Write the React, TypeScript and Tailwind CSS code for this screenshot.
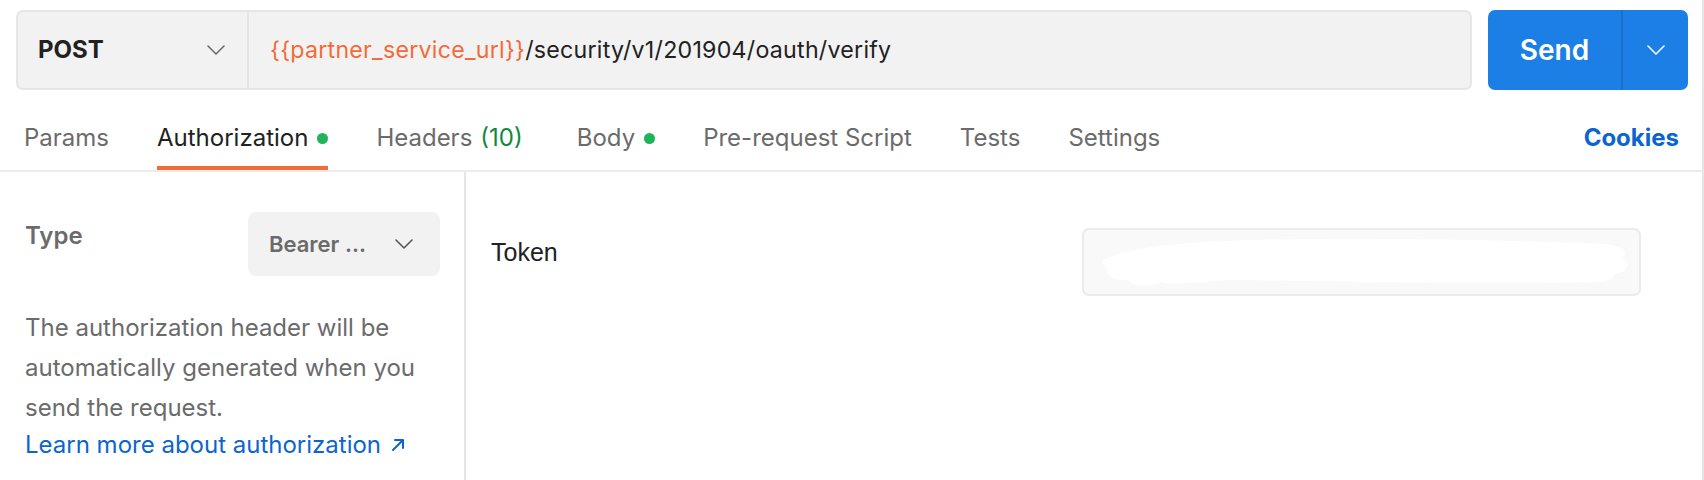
const Chevron = ({ className }: { className?: string }) => (
  <svg width="18" height="10" viewBox="0 0 18 10" fill="none" className={className}>
    <path d="M1 1l8 8 8-8" stroke="currentColor" strokeWidth="1.6" strokeLinecap="round" strokeLinejoin="round" />
  </svg>
);

const Dot = () => <span className="ml-[9px] inline-block w-[11px] h-[11px] rounded-full bg-[#1fb35a]" />;

const tabs = [
  { label: "Params" },
  { label: "Authorization", active: true, dot: true },
  { label: "Headers", count: "(10)" },
  { label: "Body", dot: true, extra: "ml-[6px]" },
  { label: "Pre-request Script" },
  { label: "Tests" },
  { label: "Settings" },
];

export default function App() {
  return (
    <div className="w-[1704px] h-[480px] bg-white flex flex-col border-r-2 border-[#e6e6e6] font-[Inter,'Liberation_Sans',sans-serif] text-[24px] overflow-hidden">
      {/* request bar */}
      <div className="flex items-center gap-[16px] pl-[16px] pr-[14px] pt-[10px] h-[90px] shrink-0">
        <div className="flex-1 h-[80px] flex bg-[#f2f2f2] border-2 border-[#e6e6e6] rounded-[7px]">
          <div className="w-[231px] flex items-center justify-between pl-[20px] pr-[22px] border-r-2 border-[#e3e3e3]">
            <span className="font-bold text-[24px] text-[#212121]">POST</span>
            <Chevron className="text-[#6b6b6b]" />
          </div>
          <div className="flex items-center pl-[21px] text-[23.2px] tracking-[0.25px] text-[#212121]">
            <span className="text-[#f26b3a]">{"{{partner_service_url}}"}</span>
            <span>/security/v1/201904/oauth/verify</span>
          </div>
        </div>
        <div className="w-[200px] h-[80px] flex bg-[#1c7fe6] rounded-[7px] text-white">
          <div className="w-[135px] flex items-center justify-center font-semibold text-[28px] border-r-2 border-[#1a70cc]">
            Send
          </div>
          <div className="flex-1 flex items-center justify-center">
            <Chevron />
          </div>
        </div>
      </div>

      {/* tabs */}
      <div className="flex h-[82px] shrink-0 border-b-2 border-[#ececec] pl-[24px] pr-[23px]">
        <div className="flex gap-[48px]">
          {tabs.map((t) => (
            <div
              key={t.label}
              className={
                "flex items-center pt-[20px] border-b-4 " +
                (t.active ? "border-[#f26b3a] text-[#212121] " : "border-transparent text-[#6b6b6b] ") +
                (t.extra ?? "")
              }
            >
              {t.label}
              {t.count && <span className="ml-[8px] text-[#0f8a3c]">{t.count}</span>}
              {t.dot && <Dot />}
            </div>
          ))}
        </div>
        <div className="ml-auto flex items-center pt-[16px] font-bold text-[#0b64d0]">Cookies</div>
      </div>

      {/* auth content */}
      <div className="flex flex-1">
        <div className="w-[466px] shrink-0 border-r-2 border-[#e6e6e6] pl-[25px] pr-[24px]">
          <div className="flex items-start justify-between mt-[40px]">
            <span className="pt-[10px] font-semibold text-[#6b6b6b] leading-[28px]">Type</span>
            <div className="w-[192px] h-[64px] flex items-center justify-between pl-[21px] pr-[27px] bg-[#f2f2f2] rounded-[8px] text-[22px] font-semibold text-[#6b6b6b]">
              <span>Bearer ...</span>
              <Chevron className="text-[#555]" />
            </div>
          </div>
          <p className="mt-[32px] leading-[40px] text-[#6b6b6b]">
            The authorization header will be automatically generated when you send the request.
          </p>
          <a className="flex items-center leading-[34px] text-[#0b64d0]">
            Learn more about authorization
            <svg width="14" height="14" viewBox="0 0 14 14" fill="none" className="ml-[10px]">
              <path d="M2 12L12 2M4 2h8v8" stroke="currentColor" strokeWidth="2" strokeLinecap="round" strokeLinejoin="round" />
            </svg>
          </a>
        </div>

        <div className="flex-1 flex items-start pl-[25px] pt-[56px]">
          <span className="w-[591px] pt-[10px] leading-[28px] font-['Liberation_Sans',sans-serif] text-[25px] text-[#212121]">
            Token
          </span>
          <div className="w-[559px] h-[68px] bg-[#f9f9f9] border-2 border-[#ebebeb] rounded-[7px] p-[4px]">
            <svg viewBox="0 0 551 56" className="w-full h-full" preserveAspectRatio="none">
              <path
                d="M20 24 C 60 8, 140 6, 220 5 C 320 4, 420 6, 520 10 C 540 12, 545 18, 538 24 C 548 30, 544 38, 530 40 C 528 46, 520 50, 500 48 C 400 50, 300 48, 150 46 C 110 47, 90 52, 72 48 C 60 54, 44 52, 40 46 C 26 48, 16 40, 20 34 C 12 30, 14 26, 20 24 Z"
                fill="#ffffff"
              />
            </svg>
          </div>
        </div>
      </div>
    </div>
  );
}
